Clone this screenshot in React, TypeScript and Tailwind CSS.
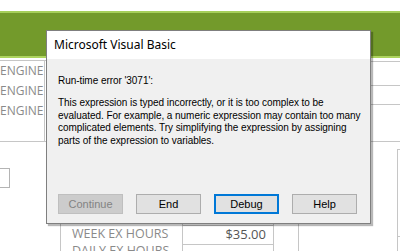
import React from "react";

const line = "absolute bg-[#c6c6c6]";

function VbButton({ label, kind }: { label: string; kind?: "disabled" | "default" }) {
  const cls =
    kind === "disabled"
      ? "border border-[#bfbfbf] bg-[#cccccc] text-[#838383]"
      : kind === "default"
      ? "border-2 border-[#0078d7] bg-[#e1e1e1] text-black"
      : "border border-[#adadad] bg-[#e1e1e1] text-black";
  return (
    <div className={`flex h-[20px] w-[65px] items-center justify-center text-[11px] ${cls}`}>
      {label}
    </div>
  );
}

export default function App() {
  return (
    <div
      className="relative h-[251px] w-[400px] overflow-hidden bg-white"
      style={{ fontFamily: "'Open Sans', sans-serif" }}
    >
      {/* header bands */}
      <div className="h-[11px] bg-white" />
      <div className="h-[47px] border-t-2 border-b-2 border-t-[#a6cf5a] border-b-[#add45e] bg-[#739a2b]" />

      {/* form canvas behind the dialog */}
      <div className={`${line} left-0 top-[60px] h-px w-[46px]`} />
      <div className={`${line} left-[44px] top-[60px] h-[81px] w-px`} />
      <div className={`${line} left-0 top-[141px] h-px w-[46px]`} />
      <div className="absolute left-0 top-[61px] flex w-[44px] flex-col text-[12px] leading-[20px] text-[#8a8a8a]">
        <span>ENGINE</span>
        <span>ENGINE</span>
        <span>ENGINE</span>
      </div>
      <div className="absolute left-[-2px] top-[168px] h-[20px] w-[12px] border border-[#b4b4b4]" />

      <div className={`${line} left-[370px] top-[61px] h-px w-[30px]`} />
      <div className={`${line} left-[370px] top-[85px] h-px w-[30px]`} />
      <div className={`${line} left-[370px] top-[104px] h-px w-[30px]`} />
      <div className={`${line} left-[370px] top-[141px] h-px w-[30px]`} />
      <div className={`${line} left-[298px] top-[141px] h-[110px] w-px`} />
      <div className={`${line} left-[397px] top-[149px] h-[102px] w-px`} />
      <div className={`${line} left-[397px] top-[149px] h-px w-[3px]`} />
      <div className={`${line} left-[397px] top-[236px] h-px w-[3px]`} />

      <div className="absolute left-[60px] top-[222px] flex h-[40px] w-[214px]">
        <div className="flex w-[122px] flex-col border-l border-[#c6c6c6] pl-[11px] pt-[3px] text-[12.5px] leading-[17px] text-[#8a8a8a]">
          <span>WEEK EX HOURS</span>
          <span>DAILY EX HOURS</span>
        </div>
        <div className="flex w-[92px] flex-col border-x border-[#c6c6c6]">
          <div className="mt-[3px] flex h-[20px] items-center justify-end border-y border-[#c6c6c6] pr-[7px] text-[13px] text-[#555]">
            $35.00
          </div>
        </div>
      </div>

      {/* error dialog */}
      <div className="absolute left-[46px] top-[30px] flex h-[194px] w-[325px] flex-col border border-[#7f7f7f] shadow-[2px_2px_1px_rgba(0,0,0,0.28)]">
        <div
          className="flex h-[28px] items-center bg-white pl-[7px] text-[12px] text-black"
          style={{ fontFamily: "'Noto Sans', sans-serif" }}
        >
          Microsoft Visual Basic
        </div>
        <div
          className="flex flex-1 flex-col bg-[#f0f0f0] pl-[11px] pr-[3px] text-[10px] tracking-[-0.05px] text-black"
          style={{ fontFamily: "'Liberation Sans', sans-serif" }}
        >
          <div className="pt-[15px] leading-[13px]">Run-time error '3071':</div>
          <p className="mt-[10px] leading-[12.5px]">
            This expression is typed incorrectly, or it is too complex to be evaluated. For example, a numeric
            expression may contain too many complicated elements. Try simplifying the expression by assigning
            parts of the expression to variables.
          </p>
          <div className="mt-auto mb-[9px] flex gap-[13px] tracking-normal">
            <VbButton label="Continue" kind="disabled" />
            <VbButton label="End" />
            <VbButton label="Debug" kind="default" />
            <VbButton label="Help" />
          </div>
        </div>
      </div>
    </div>
  );
}
